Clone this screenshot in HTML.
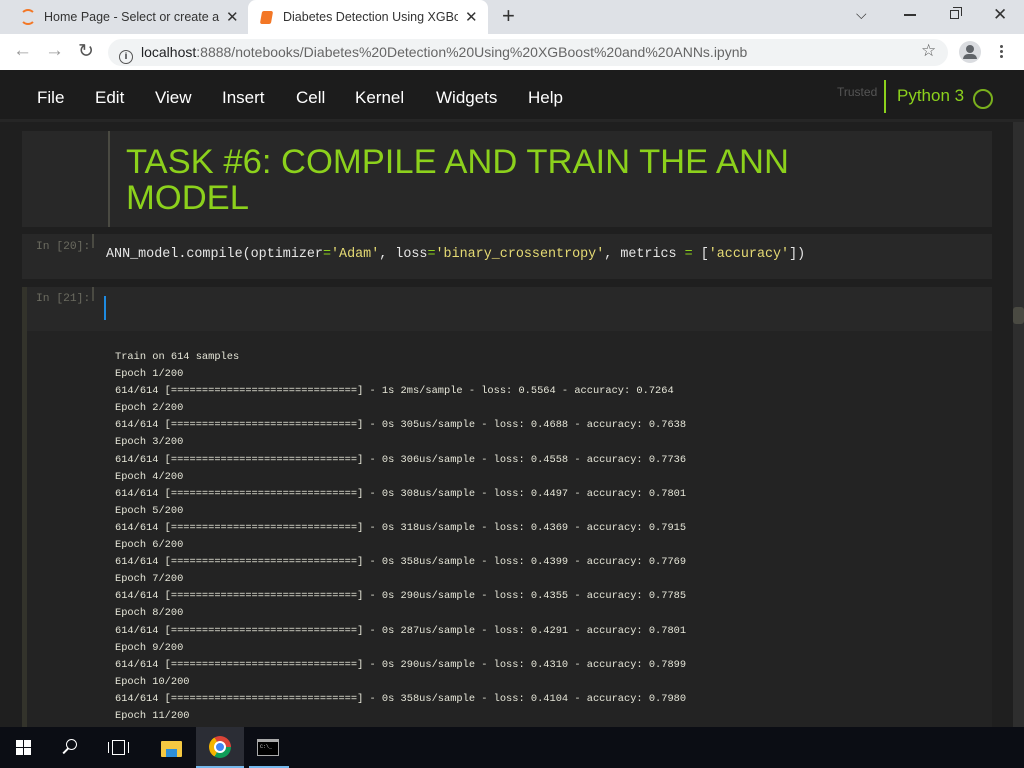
<!DOCTYPE html>
<html><head><meta charset="utf-8"><style>
*{margin:0;padding:0;box-sizing:border-box}
body{width:1024px;height:768px;overflow:hidden;background:#1f1f1f;font-family:"Liberation Sans",sans-serif;position:relative}
.abs{position:absolute}
.tabbar{left:0;top:0;width:1024px;height:34px;background:#dee1e6}
.tab{top:0;height:34px;font-size:12.5px;color:#333;line-height:34px;white-space:nowrap;overflow:hidden}
.toolbar{left:0;top:34px;width:1024px;height:36px;background:#fff}
.url{left:108px;top:39px;width:840px;height:27px;background:#f1f3f4;border-radius:14px;font-size:14px;line-height:27px;color:#202124}
.hdr{left:0;top:70px;width:1024px;height:52px;background:#1c1c1c;border-bottom:3px solid #262626}
.menu{top:88px;font-size:17px;color:#fff}
.mono{font-family:"Liberation Mono",monospace}
.out{left:115px;font-size:10.35px;color:#e6e6d8;white-space:pre;line-height:17.1px}
.task{left:0;top:727px;width:1024px;height:41px;background:#0b0d14}
</style></head><body>
<div class="abs tabbar"></div>
<div class="abs" style="left:20px;top:9px;width:16px;height:16px;border:2px solid #f37726;border-radius:50%;border-left-color:transparent;border-right-color:transparent"></div>
<div class="abs tab" style="left:44px;width:176px">Home Page - Select or create a n</div>
<div class="abs" style="left:226px;top:8px;font-size:15px;color:#333">✕</div>
<div class="abs" style="left:248px;top:0;width:240px;height:36px;background:#fff;border-radius:8px 8px 0 0"></div>
<div class="abs" style="left:261px;top:11px;width:11px;height:13px;background:#f37726;border-radius:2px;transform:skewX(-10deg)"></div>
<div class="abs tab" style="left:283px;width:175px">Diabetes Detection Using XGBoos</div>
<div class="abs" style="left:465px;top:8px;font-size:15px;color:#333">✕</div>
<div class="abs" style="left:502px;top:3px;font-size:22px;color:#333">+</div>
<div class="abs" style="left:856px;top:6px;font-size:14px;color:#333">⌵</div>
<div class="abs" style="left:904px;top:14px;width:12px;height:1.5px;background:#333"></div>
<div class="abs" style="left:950px;top:10px;width:9px;height:9px;border:1.3px solid #333"></div>
<div class="abs" style="left:953px;top:7px;width:9px;height:9px;border-top:1.3px solid #333;border-right:1.3px solid #333"></div>
<div class="abs" style="left:993px;top:5px;font-size:17px;color:#333">✕</div>
<div class="abs toolbar"></div>
<div class="abs" style="left:13px;top:40px;font-size:19px;color:#999">←</div>
<div class="abs" style="left:45px;top:40px;font-size:19px;color:#999">→</div>
<div class="abs" style="left:78px;top:40px;font-size:19px;color:#555">↻</div>
<div class="abs url"><span style="display:inline-block;width:14px;height:14px;border:1.5px solid #555;border-radius:50%;margin:0 8px 0 11px;vertical-align:-2px;font-size:9px;line-height:11px;text-align:center;font-weight:bold">i</span>localhost<span style="color:#666">:8888/notebooks/Diabetes%20Detection%20Using%20XGBoost%20and%20ANNs.ipynb</span></div>
<div class="abs" style="left:921px;top:41px;font-size:17px;color:#555">☆</div>
<div class="abs" style="left:959px;top:41px;width:22px;height:22px;border-radius:50%;background:#dadce0"></div>
<div class="abs" style="left:966px;top:45px;width:8px;height:8px;border-radius:50%;background:#5f6368"></div>
<div class="abs" style="left:963px;top:54px;width:14px;height:5px;border-radius:5px 5px 0 0;background:#5f6368"></div>
<div class="abs" style="left:1000px;top:44px;width:3px;height:14px;background:radial-gradient(circle,#555 1.4px,transparent 1.6px) 0 0/3px 5px"></div>
<div class="abs hdr"></div>
<div class="abs menu" style="left:37px">File</div>
<div class="abs menu" style="left:95px">Edit</div>
<div class="abs menu" style="left:155px">View</div>
<div class="abs menu" style="left:222px">Insert</div>
<div class="abs menu" style="left:296px">Cell</div>
<div class="abs menu" style="left:355px">Kernel</div>
<div class="abs menu" style="left:436px">Widgets</div>
<div class="abs menu" style="left:528px">Help</div>
<div class="abs" style="left:837px;top:85px;font-size:12px;color:#555">Trusted</div>
<div class="abs" style="left:884px;top:80px;width:2px;height:33px;background:#8cd11c"></div>
<div class="abs" style="left:897px;top:86px;font-size:17px;color:#8cd11c">Python 3</div>
<div class="abs" style="left:973px;top:89px;width:20px;height:20px;border:2.5px solid #7ab01d;border-radius:50%"></div>
<div class="abs" style="left:1013px;top:122px;width:11px;height:605px;background:#2e2e2e"></div>
<div class="abs" style="left:1013px;top:307px;width:11px;height:17px;background:#4a4a42;border-radius:3px"></div>
<div class="abs" style="left:22px;top:131px;width:970px;height:96px;background:#282828"></div>
<div class="abs" style="left:108px;top:131px;width:2px;height:96px;background:#4a4a42"></div>
<div class="abs" style="left:126px;top:144px;font-size:34.6px;line-height:36px;color:#8cd11c">TASK #6: COMPILE AND TRAIN THE ANN<br>MODEL</div>
<div class="abs" style="left:22px;top:234px;width:970px;height:45px;background:#282828"></div>
<div class="abs mono" style="left:36px;top:241px;font-size:11.3px;color:#6b6b60">In [20]:</div>
<div class="abs" style="left:92px;top:234px;width:2px;height:14px;background:#4a4a42"></div>
<div class="abs mono" style="left:106px;top:247px;font-size:13.4px;color:#e6e6e6;white-space:pre">ANN_model.compile(optimizer<span style="color:#8cd11c">=</span><span style="color:#e6db74">'Adam'</span>, loss<span style="color:#8cd11c">=</span><span style="color:#e6db74">'binary_crossentropy'</span>, metrics <span style="color:#8cd11c">=</span> [<span style="color:#e6db74">'accuracy'</span>])</div>
<div class="abs" style="left:22px;top:287px;width:970px;height:440px;background:#232323"></div>
<div class="abs" style="left:27px;top:287px;width:965px;height:44px;background:#282828"></div>
<div class="abs" style="left:22px;top:287px;width:5px;height:440px;background:#33332b"></div>
<div class="abs mono" style="left:36px;top:293px;font-size:11.3px;color:#6b6b60">In [21]:</div>
<div class="abs" style="left:92px;top:287px;width:2px;height:14px;background:#4a4a42"></div>
<div class="abs" style="left:104px;top:296px;width:2px;height:24px;background:#1e8ae0"></div>
<div class="abs mono out" style="top:349px">Train on 614 samples
Epoch 1/200
614/614 [==============================] - 1s 2ms/sample - loss: 0.5564 - accuracy: 0.7264
Epoch 2/200
614/614 [==============================] - 0s 305us/sample - loss: 0.4688 - accuracy: 0.7638
Epoch 3/200
614/614 [==============================] - 0s 306us/sample - loss: 0.4558 - accuracy: 0.7736
Epoch 4/200
614/614 [==============================] - 0s 308us/sample - loss: 0.4497 - accuracy: 0.7801
Epoch 5/200
614/614 [==============================] - 0s 318us/sample - loss: 0.4369 - accuracy: 0.7915
Epoch 6/200
614/614 [==============================] - 0s 358us/sample - loss: 0.4399 - accuracy: 0.7769
Epoch 7/200
614/614 [==============================] - 0s 290us/sample - loss: 0.4355 - accuracy: 0.7785
Epoch 8/200
614/614 [==============================] - 0s 287us/sample - loss: 0.4291 - accuracy: 0.7801
Epoch 9/200
614/614 [==============================] - 0s 290us/sample - loss: 0.4310 - accuracy: 0.7899
Epoch 10/200
614/614 [==============================] - 0s 358us/sample - loss: 0.4104 - accuracy: 0.7980
Epoch 11/200
614/614 [==============================] - 0s 300us/sample - loss: 0.4100 - accuracy: 0.7980</div>
<div class="abs task"></div>
<div class="abs" style="left:16px;top:740px;width:15px;height:15px;background:linear-gradient(90deg,transparent 7px,#0b0d14 7px,#0b0d14 8px,transparent 8px),linear-gradient(transparent 7px,#0b0d14 7px,#0b0d14 8px,transparent 8px),#fff"></div>
<div class="abs" style="left:66px;top:739px;width:11px;height:11px;border:1.6px solid #fff;border-radius:50%"></div>
<div class="abs" style="left:62px;top:750px;width:7px;height:1.6px;background:#fff;transform:rotate(-45deg)"></div>
<div class="abs" style="left:112px;top:740px;width:13px;height:15px;border:1.5px solid #fff"></div>
<div class="abs" style="left:108px;top:742px;width:21px;height:11px;border-left:1.5px solid #fff;border-right:1.5px solid #fff"></div>
<div class="abs" style="left:161px;top:741px;width:21px;height:16px;background:#f5c842;border-radius:1px"></div>
<div class="abs" style="left:166px;top:749px;width:11px;height:8px;background:#2d8ed8"></div>
<div class="abs" style="left:196px;top:727px;width:48px;height:41px;background:#2b2d35;border-bottom:2px solid #76b9ed"></div>
<div class="abs" style="left:209px;top:736px;width:22px;height:22px;border-radius:50%;background:conic-gradient(from -30deg,#db4437 0 120deg,#0f9d58 120deg 240deg,#f4b400 240deg 360deg)"></div>
<div class="abs" style="left:214px;top:741px;width:12px;height:12px;border-radius:50%;background:#4285f4;border:2px solid #fff"></div>
<div class="abs" style="left:249px;top:727px;width:40px;height:41px;border-bottom:2px solid #76b9ed"></div>
<div class="abs" style="left:257px;top:739px;width:22px;height:17px;background:#000;border:1px solid #aaa;border-top:3px solid #aaa"></div>
<div class="abs" style="left:260px;top:744px;font-size:5px;color:#ccc;font-family:'Liberation Mono',monospace">C:\_</div>
</body></html>
